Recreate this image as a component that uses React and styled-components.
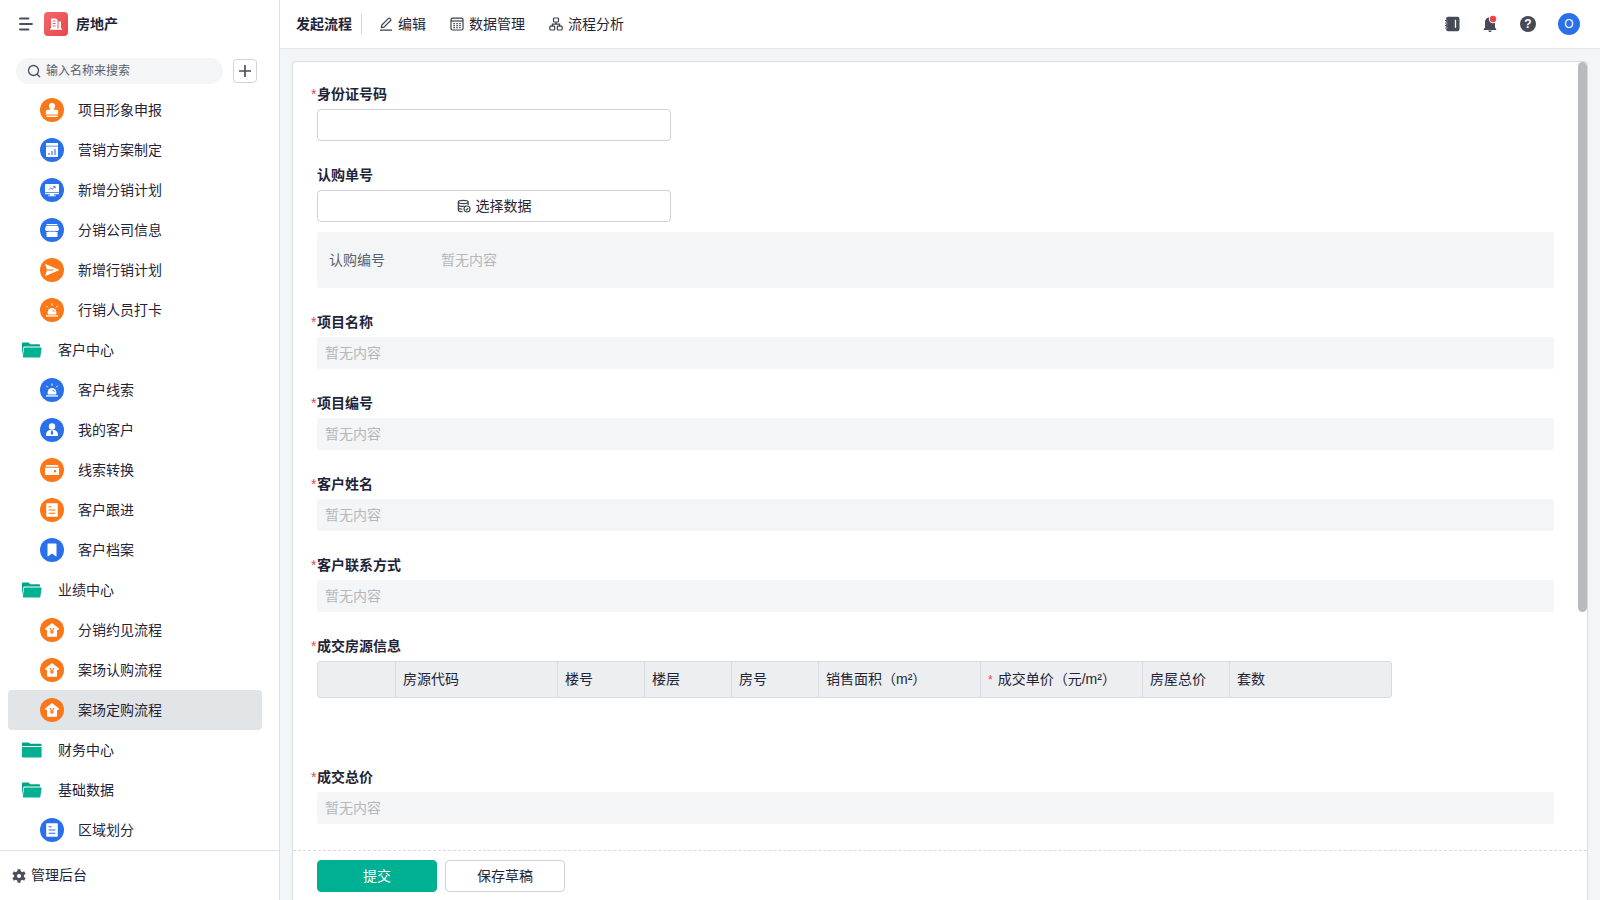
import React, { useState } from "react";
import styled, { createGlobalStyle } from "styled-components";

const ORANGE = "#fa7819";
const BLUE = "#2a70e8";

const menu = [
  { text: "项目形象申报", icon: "stamp", color: ORANGE },
  { text: "营销方案制定", icon: "report", color: BLUE },
  { text: "新增分销计划", icon: "monitor", color: BLUE },
  { text: "分销公司信息", icon: "store", color: BLUE },
  { text: "新增行销计划", icon: "send", color: ORANGE },
  { text: "行销人员打卡", icon: "siren", color: ORANGE },
  { text: "客户中心", folder: "open" },
  { text: "客户线索", icon: "siren", color: BLUE },
  { text: "我的客户", icon: "person", color: BLUE },
  { text: "线索转换", icon: "wallet", color: ORANGE },
  { text: "客户跟进", icon: "doc", color: ORANGE },
  { text: "客户档案", icon: "bookmark", color: BLUE },
  { text: "业绩中心", folder: "open" },
  { text: "分销约见流程", icon: "house", color: ORANGE },
  { text: "案场认购流程", icon: "house", color: ORANGE },
  { text: "案场定购流程", icon: "house", color: ORANGE },
  { text: "财务中心", folder: "closed" },
  { text: "基础数据", folder: "open" },
  { text: "区域划分", icon: "doc", color: BLUE },
];

const columns = [
  { text: "", width: 77 },
  { text: "房源代码", width: 162 },
  { text: "楼号", width: 87 },
  { text: "楼层", width: 87 },
  { text: "房号", width: 87 },
  { text: "销售面积（m²）", width: 162 },
  { text: "成交单价（元/m²）", width: 162, required: true },
  { text: "房屋总价", width: 87 },
  { text: "套数", width: 162 },
];

const shapes = {
  stamp: () => (
    <>
      <circle cx="12" cy="8" r="3.1" />
      <path d="M10.6 9.5h2.8l.4 2.3h2.6c1 0 1.8.8 1.8 1.8v2.9H5.8v-2.9c0-1 .8-1.8 1.8-1.8h2.6z" />
      <path d="M6.3 17.5h11.4V19H6.3z" />
    </>
  ),
  report: (color) => (
    <>
      <path d="M6.5 5h11a.5.5 0 0 1 .5.5v2.2H6V5.5a.5.5 0 0 1 .5-.5z" />
      <path d="M6 8.6h12v9.9a.5.5 0 0 1-.5.5h-11a.5.5 0 0 1-.5-.5z" />
      <path d="M9 17v-2M12 17v-4M15 17v-6" stroke={color} strokeWidth="1.1" />
    </>
  ),
  monitor: (color) => (
    <>
      <path d="M5.7 6h12.6c.4 0 .7.3.7.7V14H5V6.700c0-.4.3-.7.7-.7z" />
      <path d="M5 14.7h14v.8c0 .5-.3.8-.7.8H14l.3 1.200H16v.8H8v-.8h1.700l.3-1.200H5.700c-.4 0-.7-.3-.7-.8z" />
      <path d="M8.700 11.800l2-1.800 1.500 1.200 2.800-2.600M13.300 8.500h1.900v1.800" stroke={color} strokeWidth=".9" fill="none" />
    </>
  ),
  store: () => (
    <>
      <path d="M6.5 6h11v1.300h-11z" />
      <path d="M6 8h12l1 3.200a2.200 2.200 0 0 1-3.600 1.300 2.300 2.300 0 0 1-3.400 0 2.300 2.300 0 0 1-3.400 0A2.200 2.200 0 0 1 5 11.200z" />
      <path d="M6.5 14c1 .1 1.700-.1 2.200-.5 1 .7 2.300.7 3.300 0 1 .7 2.300.7 3.300 0 .5.4 1.200.6 2.200.5v4.500a.5.500 0 0 1-.5.500H7a.5.500 0 0 1-.5-.5z" />
    </>
  ),
  send: (color) => (
    <>
      <path d="M5 5.800L19.400 12 5 18.200l2-6.200z" />
      <path d="M6.500 12h7" stroke={color} strokeWidth="1.1" />
    </>
  ),
  siren: (color) => (
    <>
      <path d="M7.700 16.500v-2.200a4.300 4.300 0 0 1 8.600 0v2.200z" />
      <path d="M6 17.300h12v1.300H6z" />
      <path d="M12 5.500v2.300M6.300 7.700l1.500 1.700M17.700 7.700l-1.500 1.700" stroke="#fff" strokeWidth="1" />
      <path d="M12.500 12.200c1.100.1 1.800.8 1.900 1.900" stroke={color} strokeWidth="1" fill="none" />
    </>
  ),
  person: (color) => (
    <>
      <circle cx="12" cy="8.500" r="3.200" />
      <path d="M9.300 12h5.400c1.800.7 3.300 2.500 3.300 4.500V18H6v-1.500c0-2 1.500-3.800 3.300-4.500z" />
      <path d="M11.400 12.500h1.200l.6 3.200-1.200 1.300-1.200-1.300z" fill={color} />
    </>
  ),
  wallet: (color) => (
    <>
      <path d="M6.500 7h11c.4 0 .7.3.7.7v1.100H5.800V7.700c0-.4.3-.7.7-.7z" />
      <path d="M5 9.700h14v6.600a.7.700 0 0 1-.7.700H5.700a.7.700 0 0 1-.7-.7z" />
      <rect x="14" y="12" width="2.200" height="2.200" rx=".5" fill={color} />
    </>
  ),
  doc: (color) => (
    <>
      <rect x="6.200" y="5.300" width="11.600" height="13.400" rx=".8" />
      <path d="M8.600 8.800h3M8.600 12h6.800M8.600 15.200h6.800" stroke={color} strokeWidth="1.100" />
    </>
  ),
  bookmark: () => <path d="M8.200 5.500h7.600c.4 0 .7.3.7.7v12.500L12 15.400l-4.500 3.300V6.200c0-.4.3-.7.7-.7z" />,
  house: (color) => (
    <>
      <path d="M12 5l7 5.600-.7 1.300H17V18a.8.8 0 0 1-.8.8H7.800A.8.8 0 0 1 7 18v-6.100H5.700L5 10.600z" />
      <text x="12" y="16" fontSize="9" fontWeight="700" textAnchor="middle" fill={color}>
        ¥
      </text>
    </>
  ),
};

const RoundIcon = ({ name, color }) => (
  <svg width="24" height="24" viewBox="0 0 24 24" aria-hidden="true">
    <circle cx="12" cy="12" r="12" fill={color} />
    <g fill="#fff">{shapes[name](color)}</g>
  </svg>
);

const FolderIcon = ({ open }) => (
  <svg width="20" height="16" viewBox="0 0 20 16" fill="#00b092" aria-hidden="true">
    {open ? (
      <>
        <path d="M0 13.500V1.500C0 .9.400.5 1 .5h5.500l1.800 1.700H17c.6 0 1 .4 1 1v1.300H2.300c-.5 0-.8.3-.9.700z" fill="#00a585" />
        <path d="M3 5.500h16.200c.3 0 .5.200.4.500l-1.200 8.500c-.1.600-.5 1-1.100 1H1.200c-.3 0-.5-.2-.4-.5L2 6.400c.1-.5.500-.9 1-.9z" />
      </>
    ) : (
      <>
        <path d="M0 4V1.500C0 .9.400.5 1 .5h5.500l1.800 1.200H18.500c.6 0 1 .4 1 1V4z" fill="#00a585" />
        <path d="M0 5h19.600v9.500c0 .6-.4 1-1 1H1c-.6 0-1-.4-1-1z" />
      </>
    )}
  </svg>
);

const LogoIcon = () => (
  <svg width="24" height="24" viewBox="0 0 24 24" aria-hidden="true">
    <defs>
      <linearGradient id="logo" x1="0" y1="0" x2="1" y2="1">
        <stop offset="0" stopColor="#f0686a" />
        <stop offset="1" stopColor="#e8474e" />
      </linearGradient>
    </defs>
    <rect width="24" height="24" rx="4" fill="url(#logo)" />
    <path d="M7.500 6.500H12l1.500 1.500v8.500h1V9.500H17v7h1v1.200H6v-1.200h1V7c0-.3.200-.5.5-.5z" fill="#fff" />
    <path d="M8.800 9h2.700M8.800 11.500h2.700M8.800 14h2.700" stroke="#ec555b" strokeWidth="1" />
  </svg>
);

const MenuIcon = () => (
  <svg width="14" height="14" viewBox="0 0 14 14" stroke="#4b4f5c" strokeWidth="1.800" strokeLinecap="round" aria-hidden="true">
    <path d="M1 1.500h8.500M1 7h12M1 12.500h8.500" />
  </svg>
);

const SearchIcon = () => (
  <svg width="14" height="14" viewBox="0 0 14 14" fill="none" stroke="#4b4f5c" strokeWidth="1.300" strokeLinecap="round" aria-hidden="true">
    <circle cx="6.500" cy="6.500" r="5" />
    <path d="M10.200 10.200l2.500 2.500" />
  </svg>
);

const PlusIcon = () => (
  <svg width="14" height="14" viewBox="0 0 14 14" stroke="#4b4f5c" strokeWidth="1.700" aria-hidden="true">
    <path d="M7 1v12M1 7h12" />
  </svg>
);

const GearIcon = () => (
  <svg width="14" height="14" viewBox="0 0 14 14" aria-hidden="true">
    <g stroke="#4b4f5c" strokeWidth="3">
      <path d="M7 .2v13.600M1.100 3.600l11.800 6.800M1.100 10.400l11.800-6.800" />
    </g>
    <circle cx="7" cy="7" r="5" fill="#4b4f5c" />
    <circle cx="7" cy="7" r="2.100" fill="#fff" />
  </svg>
);

const EditIcon = () => (
  <svg width="14" height="14" viewBox="0 0 14 14" fill="none" stroke="#3c404e" strokeWidth="1.200" strokeLinejoin="round" aria-hidden="true">
    <path d="M2.300 10.700l.6-2.700L9.500 1.400c.4-.4 1-.4 1.400 0l.7.7c.4.4.4 1 0 1.400L5 10.100zM1 13.200h12" />
  </svg>
);

const DataIcon = () => (
  <svg width="14" height="14" viewBox="0 0 14 14" fill="none" stroke="#3c404e" strokeWidth="1.200" aria-hidden="true">
    <rect x="1" y="1.200" width="12" height="11.800" rx="1.500" />
    <path d="M1 4h12" />
    <path d="M3.400 6.600h1.500M6.300 6.600h1.500M9.200 6.600h1.500M3.400 8.600h1.500M6.300 8.600h1.500M9.200 8.600h1.500M3.400 10.600h1.500M6.300 10.600h1.500M9.200 10.600h1.500" />
  </svg>
);

const FlowIcon = () => (
  <svg width="14" height="14" viewBox="0 0 14 14" fill="none" stroke="#3c404e" strokeWidth="1.200" aria-hidden="true">
    <rect x="4.500" y="1" width="5" height="4" rx=".8" />
    <rect x=".9" y="9.200" width="4.800" height="3.800" rx=".8" />
    <rect x="8.300" y="9.200" width="4.800" height="3.800" rx=".8" />
    <path d="M7 5v2M3.300 9.200V7.100h7.400v2.100" />
  </svg>
);

const PickIcon = () => (
  <svg width="14" height="14" viewBox="0 0 14 14" fill="none" stroke="#3c404e" strokeWidth="1.200" aria-hidden="true">
    <path d="M1.300 3c0-2.200 9.900-2.200 9.900 0s-9.900 2.200-9.900 0zM1.300 3v8.200c0 .9 1.700 1.400 4.200 1.500M11.200 3v3M1.300 5.700c0 1 2 1.700 4.700 1.700 1 0 2-.1 2.700-.4M1.300 8.500c0 .9 1.700 1.500 4 1.600" />
    <circle cx="10" cy="10" r="3" />
    <path d="M8.800 10.200l.9.700 1.500-1.700" />
  </svg>
);

const NotebookIcon = () => (
  <svg width="16" height="16" viewBox="0 0 16 16" aria-hidden="true">
    <rect x="2" y=".7" width="13.500" height="14.600" rx="2.200" fill="#464a58" />
    <path d="M1.200 4.500h2M1.200 7h2M1.200 9.500h2M1.200 12h2" stroke="#fff" strokeWidth="1.600" />
    <path d="M1 4.500h2M1 7h2M1 9.500h2M1 12h2" stroke="#464a58" strokeWidth="1" />
    <path d="M11.500 3.800v8" stroke="#fff" strokeWidth="1.300" />
  </svg>
);

const BellIcon = () => (
  <svg width="16" height="18" viewBox="0 0 16 18" aria-hidden="true">
    <path d="M8 2.300c2.900 0 5 2.200 5 5v5.200l1.300 1.700v.8H1.700v-.8L3 12.500V7.300c0-2.800 2.100-5 5-5z" fill="#464a58" />
    <path d="M6 15.500h4L8.800 17H7.200z" fill="#464a58" />
    <circle cx="11" cy="4" r="4.200" fill="#fff" />
    <circle cx="11" cy="4" r="3.200" fill="#ee4349" />
  </svg>
);

const Field = ({ id, label, required, children }) => (
  <FieldGroup>
    <FieldLabel htmlFor={id} $required={required}>
      {required && <Star>*</Star>}
      {label}
    </FieldLabel>
    {children}
  </FieldGroup>
);

const EmptyField = ({ id, label }) => (
  <Field id={id} label={label} required>
    <EmptyValue id={id}>暂无内容</EmptyValue>
  </Field>
);

const Sidebar = () => {
  const [active, setActive] = useState("案场定购流程");

  return (
    <Side>
      <SideHeader>
        <IconButton type="button" aria-label="菜单">
          <MenuIcon />
        </IconButton>
        <LogoIcon />
        <AppName>房地产</AppName>
      </SideHeader>
      <SearchRow>
        <SearchBox>
          <SearchIcon />
          <SearchInput type="search" aria-label="搜索" placeholder="输入名称来搜索" />
        </SearchBox>
        <AddButton type="button" aria-label="新增">
          <PlusIcon />
        </AddButton>
      </SearchRow>
      <MenuList>
        {menu.map((item) => (
          <li key={item.text}>
            <MenuItem
              type="button"
              $folder={item.folder}
              $active={item.text === active}
              onClick={() => !item.folder && setActive(item.text)}
            >
              {item.folder ? (
                <FolderIcon open={item.folder === "open"} />
              ) : (
                <RoundIcon name={item.icon} color={item.color} />
              )}
              {item.text}
            </MenuItem>
          </li>
        ))}
      </MenuList>
      <AdminLink href="#admin">
        <GearIcon />
        管理后台
      </AdminLink>
    </Side>
  );
};

const TopBar = () => (
  <Header>
    <PageTitle>发起流程</PageTitle>
    <Divider />
    <Nav>
      <NavLink href="#edit">
        <EditIcon />
        编辑
      </NavLink>
      <NavLink href="#data">
        <DataIcon />
        数据管理
      </NavLink>
      <NavLink href="#analysis">
        <FlowIcon />
        流程分析
      </NavLink>
    </Nav>
    <Tools>
      <IconButton type="button" aria-label="通讯录">
        <NotebookIcon />
      </IconButton>
      <IconButton type="button" aria-label="消息">
        <BellIcon />
      </IconButton>
      <HelpButton type="button" aria-label="帮助">?</HelpButton>
      <Avatar type="button">O</Avatar>
    </Tools>
  </Header>
);

const ProcessForm = () => (
  <Card onSubmit={(e) => e.preventDefault()}>
    <Scroll>
      <Field id="idCard" label="身份证号码" required>
        <TextInput id="idCard" type="text" />
      </Field>
      <Field id="order" label="认购单号">
        <PickButton id="order" type="button">
          <PickIcon />
          选择数据
        </PickButton>
        <PickedPanel>
          <PickedName>认购编号</PickedName>
          <PickedValue>暂无内容</PickedValue>
        </PickedPanel>
      </Field>
      <EmptyField id="projectName" label="项目名称" />
      <EmptyField id="projectCode" label="项目编号" />
      <EmptyField id="customerName" label="客户姓名" />
      <EmptyField id="customerPhone" label="客户联系方式" />
      <FieldGroup>
        <FieldLabel as="div" id="houses" $required>
          <Star>*</Star>
          成交房源信息
        </FieldLabel>
        <TableWrap>
          <Table aria-labelledby="houses">
            <thead>
              <tr>
                {columns.map((col) => (
                  <Th key={col.text} $width={col.width} scope="col">
                    {col.required && <ThStar>*</ThStar>}
                    {col.text}
                  </Th>
                ))}
              </tr>
            </thead>
          </Table>
        </TableWrap>
      </FieldGroup>
      <EmptyField id="total" label="成交总价" />
    </Scroll>
    <Thumb />
    <Footer>
      <SubmitButton type="submit">提交</SubmitButton>
      <FooterButton type="button">保存草稿</FooterButton>
    </Footer>
  </Card>
);

export default function App() {
  return (
    <>
      <GlobalStyle />
      <Layout>
        <Sidebar />
        <Main>
          <TopBar />
          <ProcessForm />
        </Main>
      </Layout>
    </>
  );
}

const GlobalStyle = createGlobalStyle`
  * {
    box-sizing: border-box;
  }
  body {
    margin: 0;
    background: #f3f5f7;
    color: #1f2438;
    font-family: "Liberation Sans", "Noto Sans CJK SC", sans-serif;
    font-size: 14px;
    line-height: 21px;
  }
  button, input {
    font: inherit;
    color: inherit;
  }
  button {
    padding: 0;
    cursor: pointer;
  }
  svg {
    display: block;
    flex: none;
  }
`;
const Layout = styled.div`
  display: flex;
  height: 100vh;
`;
const Side = styled.aside`
  display: flex;
  flex-direction: column;
  flex: none;
  width: 280px;
  background: #fff;
  border-right: 1px solid #dee0e3;
`;
const SideHeader = styled.div`
  display: flex;
  align-items: center;
  height: 48px;
  padding-left: 19px;

  button {
    margin-right: 11px;
  }
`;
const IconButton = styled.button`
  display: flex;
  border: none;
  background: none;
`;
const AppName = styled.strong`
  margin-left: 8px;
  font-weight: 700;
`;
const SearchRow = styled.div`
  display: flex;
  align-items: center;
  gap: 10px;
  padding: 10px 22px 6px 16px;
`;
const SearchBox = styled.label`
  display: flex;
  align-items: center;
  gap: 5px;
  flex: 1;
  height: 26px;
  padding: 0 12px 0 11px;
  border-radius: 13px;
  background: #f3f5f7;
`;
const SearchInput = styled.input`
  flex: 1;
  min-width: 0;
  padding: 0;
  border: none;
  outline: none;
  background: transparent;
  font-size: 12px;

  &::placeholder {
    color: #5c606c;
  }
`;
const AddButton = styled.button`
  display: flex;
  align-items: center;
  justify-content: center;
  width: 24px;
  height: 24px;
  border: 1px solid #d0d3d7;
  border-radius: 4px;
  background: #fff;
`;
const MenuList = styled.ul`
  flex: 1;
  min-height: 0;
  margin: 0;
  padding: 0 17px 0 8px;
  list-style: none;
  overflow-y: auto;
  scrollbar-width: none;
`;
const MenuItem = styled.button`
  display: flex;
  align-items: center;
  gap: ${(props) => (props.$folder ? "16px" : "14px")};
  width: 100%;
  height: 40px;
  padding-left: ${(props) => (props.$folder ? "14px" : "32px")};
  border: none;
  border-radius: 4px;
  background: ${(props) => (props.$active ? "#e2e5e8" : "transparent")};
  text-align: left;
`;
const AdminLink = styled.a`
  display: flex;
  align-items: center;
  gap: 5px;
  height: 50px;
  padding-left: 12px;
  border-top: 1px solid #dee0e3;
  color: inherit;
  text-decoration: none;
`;
const Main = styled.main`
  display: flex;
  flex-direction: column;
  flex: 1;
  min-width: 0;
`;
const Header = styled.header`
  display: flex;
  align-items: center;
  flex: none;
  height: 49px;
  padding: 0 20px 0 16px;
  border-bottom: 1px solid #e4e6e8;
  background: #fff;
`;
const PageTitle = styled.h1`
  margin: 0;
  font-size: 14px;
  font-weight: 700;
`;
const Divider = styled.span`
  width: 1px;
  height: 20px;
  margin: 0 17px 0 9px;
  background: #d0d3d7;
`;
const Nav = styled.nav`
  display: flex;
  gap: 24px;
`;
const NavLink = styled.a`
  display: flex;
  align-items: center;
  gap: 5px;
  color: inherit;
  text-decoration: none;
`;
const Tools = styled.div`
  display: flex;
  align-items: center;
  gap: 22px;
  margin-left: auto;
`;
const HelpButton = styled.button`
  width: 16px;
  height: 16px;
  border: none;
  border-radius: 50%;
  background: #464a58;
  color: #fff;
  font-size: 12px;
  font-weight: 700;
  line-height: 16px;
`;
const Avatar = styled.button`
  width: 22px;
  height: 22px;
  border: none;
  border-radius: 50%;
  background: #2a70e8;
  color: #fff;
  font-size: 12px;
  line-height: 22px;
`;
const Card = styled.form`
  position: relative;
  display: flex;
  flex-direction: column;
  flex: 1;
  min-height: 0;
  margin: 12px 12px 0;
  border: 1px solid #dadde0;
  border-bottom: none;
  border-radius: 4px 4px 0 0;
  background: #fff;
`;
const Scroll = styled.div`
  display: flex;
  flex-direction: column;
  gap: 24px;
  flex: 1;
  min-height: 0;
  padding: 22px 33px 24px 24px;
  overflow-y: auto;
  scrollbar-width: none;
`;
const Thumb = styled.span`
  position: absolute;
  top: 0;
  right: 0;
  width: 9px;
  height: 550px;
  border-radius: 5px;
  background: #b9babd;
`;
const FieldGroup = styled.div`
  flex: none;
`;
const FieldLabel = styled.label`
  display: flex;
  margin: 0 0 4px ${(props) => (props.$required ? "-6px" : "0")};
  font-weight: 700;
`;
const Star = styled.span`
  width: 6px;
  color: #e5484d;
  font-weight: 400;
`;
const TextInput = styled.input`
  display: block;
  width: 354px;
  max-width: 100%;
  height: 32px;
  padding: 0 8px;
  border: 1px solid #ced1d5;
  border-radius: 4px;
  background: #fff;
`;
const PickButton = styled.button`
  display: flex;
  align-items: center;
  justify-content: center;
  gap: 5px;
  width: 354px;
  max-width: 100%;
  height: 32px;
  border: 1px solid #ced1d5;
  border-radius: 4px;
  background: #fff;
`;
const PickedPanel = styled.div`
  display: flex;
  align-items: center;
  height: 56px;
  margin-top: 10px;
  padding: 0 12px;
  border-radius: 2px;
  background: #f3f5f7;
`;
const PickedName = styled.span`
  width: 112px;
  color: #5c606c;
`;
const PickedValue = styled.span`
  color: #b5b7bb;
`;
const EmptyValue = styled.output`
  display: block;
  padding: 0 8px;
  border-radius: 2px;
  background: #f3f5f7;
  color: #b5b7bb;
  line-height: 32px;
`;
const TableWrap = styled.div`
  min-height: 82px;
  overflow-x: auto;
`;
const Table = styled.table`
  border: 1px solid #d9dcdf;
  border-radius: 3px;
  border-spacing: 0;
  table-layout: fixed;
  width: 1075px;
  background: #eceef0;
`;
const Th = styled.th`
  width: ${(props) => props.$width}px;
  height: 35px;
  padding: 0 7px;
  font-weight: 400;
  text-align: left;
  white-space: nowrap;

  & + & {
    border-left: 1px solid #d9dcdf;
  }
`;
const ThStar = styled.span`
  margin-right: 5px;
  color: #e5484d;
  font-size: 12px;
`;
const Footer = styled.div`
  display: flex;
  flex: none;
  gap: 8px;
  padding: 9px 24px 8px;
  border-top: 1px dashed #d9dcdf;
`;
const FooterButton = styled.button`
  width: 120px;
  height: 32px;
  border: 1px solid #ced1d5;
  border-radius: 4px;
  background: #fff;
`;
const SubmitButton = styled(FooterButton)`
  border-color: #00b092;
  background: #00b092;
  color: #fff;
`;
